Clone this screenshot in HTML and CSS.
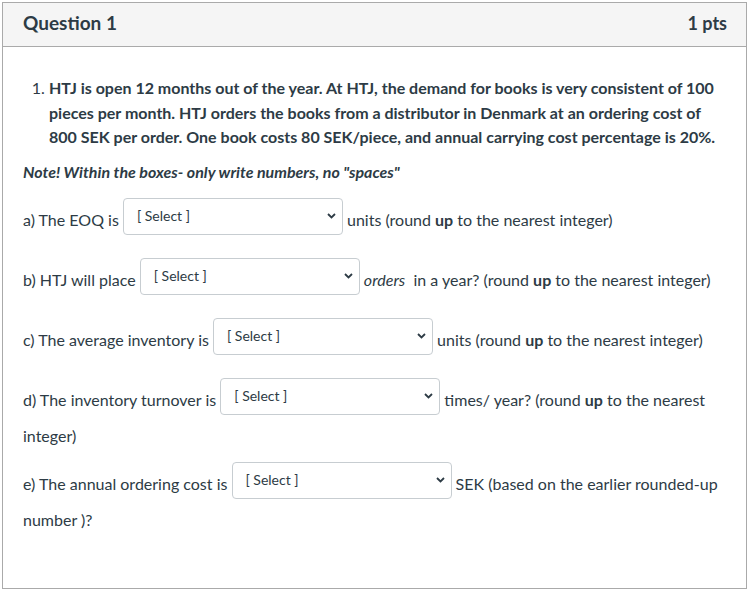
FILE: index.html
```html
<!DOCTYPE html>
<html lang="en">
<head>
<meta charset="utf-8">
<title>Question 1</title>
<link rel="stylesheet" href="styles.css">
</head>
<body>
<div class="question">
  <div class="header">
    <span class="title">Question 1</span>
    <span class="pts">1 pts</span>
  </div>
  <div class="content">
    <ol class="stem">
      <li><strong>HTJ is open 12 months out of the year. At HTJ, the demand for books is very consistent of 100 pieces per month. HTJ orders the books from a distributor in Denmark at an ordering cost of 800 SEK per order. One book costs 80 SEK/piece, and annual carrying cost percentage is 20%.</strong></li>
    </ol>
    <p class="note"><strong><em>Note! Within the boxes- only write numbers, no "spaces"</em></strong></p>
    <p>a) The EOQ is <span class="sel"><span class="sel-in"><span class="sel-text">[ Select ]</span><svg class="chev" width="9" height="6" viewBox="0 0 9 6"><path d="M1 1 L4.5 4.5 L8 1" fill="none" stroke="#2d3b45" stroke-width="1.8"/></svg></span></span> units (round <strong>up</strong> to the nearest integer)</p>
    <p>b) HTJ will place <span class="sel"><span class="sel-in"><span class="sel-text">[ Select ]</span><svg class="chev" width="9" height="6" viewBox="0 0 9 6"><path d="M1 1 L4.5 4.5 L8 1" fill="none" stroke="#2d3b45" stroke-width="1.8"/></svg></span></span> <em>orders</em>&nbsp; in a year? (round <strong>up</strong> to the nearest integer)</p>
    <p>c) The average inventory is <span class="sel"><span class="sel-in"><span class="sel-text">[ Select ]</span><svg class="chev" width="9" height="6" viewBox="0 0 9 6"><path d="M1 1 L4.5 4.5 L8 1" fill="none" stroke="#2d3b45" stroke-width="1.8"/></svg></span></span> units (round <strong>up</strong> to the nearest integer)</p>
    <p>d) The inventory turnover is <span class="sel"><span class="sel-in"><span class="sel-text">[ Select ]</span><svg class="chev" width="9" height="6" viewBox="0 0 9 6"><path d="M1 1 L4.5 4.5 L8 1" fill="none" stroke="#2d3b45" stroke-width="1.8"/></svg></span></span> times/ year? (round <strong>up</strong> to the nearest integer)</p>
    <p>e) The annual ordering cost is <span class="sel"><span class="sel-in"><span class="sel-text">[ Select ]</span><svg class="chev" width="9" height="6" viewBox="0 0 9 6"><path d="M1 1 L4.5 4.5 L8 1" fill="none" stroke="#2d3b45" stroke-width="1.8"/></svg></span></span> SEK (based on the earlier rounded-up number )?</p>
  </div>
</div>
</body>
</html>
```
FILE: styles.css
```css
html, body {
  margin: 0;
  padding: 0;
  background: #ffffff;
}

body {
  font-family: Lato, "Open Sans", "Liberation Sans", sans-serif;
  font-size: 16px;
  line-height: 24px;
  color: #2d3b45;
}

.question {
  margin: 2px;
  height: 587px;
  box-sizing: border-box;
  border: 1px solid #aaaaaa;
  background: #ffffff;
}

.header {
  display: flex;
  justify-content: space-between;
  align-items: baseline;
  background: #f5f5f5;
  border-bottom: 1px solid #aaaaaa;
  padding: 9px 19px 12px 20px;
  line-height: 22px;
  font-weight: 700;
}

.title {
  font-size: 19px;
}

.pts {
  font-size: 18px;
}

.content {
  padding: 17px 20px 0 20px;
}

.stem {
  margin: 12px 0 10px 0;
  padding-left: 26px;
  line-height: 24.5px;
}

.content p {
  margin: 12px 0;
}

.content p.note {
  margin-top: 10px;
}

.sel {
  display: inline-block;
  overflow: hidden;
  box-sizing: border-box;
  width: 220px;
  height: 37px;
  margin: 2px 0 9px 0;
  vertical-align: -18.5px;
  border: 1px solid #c7cdd1;
  border-radius: 4px;
  background: #ffffff;
}

.sel-in {
  display: flex;
  justify-content: space-between;
  align-items: center;
  height: 100%;
  box-sizing: border-box;
  padding: 0 6px 1px 13px;
}

.sel-text {
  font-size: 14px;
  line-height: 17px;
  color: #2d3b45;
}

.chev {
  display: block;
}
```
